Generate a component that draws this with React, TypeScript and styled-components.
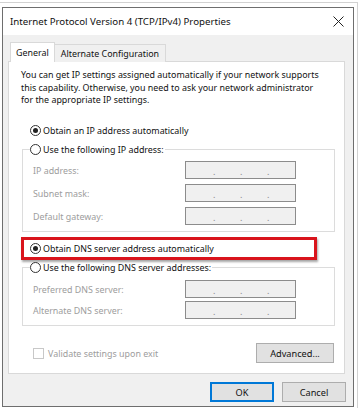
import * as React from "react";
import styled, { createGlobalStyle } from "styled-components";

const FONT = `"Noto Sans", "Open Sans", "Liberation Sans", sans-serif`;

const GlobalStyle = createGlobalStyle`
  html, body {
    margin: 0;
    padding: 0;
    background: #ffffff;
  }
  * {
    box-sizing: border-box;
  }
`;

const SScreen = styled.div`
  width: 358px;
  height: 408px;
  padding-top: 2px;
  font-family: ${FONT};
  font-size: 8.9px;
  color: #111;
`;

const SMat = styled.div`
  height: 406px;
  border-top: 1px solid #d2d2d2;
  border-right: 1px solid #d2d2d2;
  padding: 4px 3px 0 2px;
`;

const SWindow = styled.div`
  height: 400px;
  border: 1px solid #6e6e6e;
  display: flex;
  flex-direction: column;
`;

const STitleBar = styled.div`
  height: 27px;
  flex: none;
  background: #ffffff;
  display: flex;
  align-items: center;
  justify-content: space-between;
  padding: 0 9px 0 7px;
  font-size: 9.7px;
`;

const SBody = styled.div`
  flex: 1;
  background: #f0f0f0;
  padding: 7px 7px 4px 5px;
  display: flex;
  flex-direction: column;
`;

const STabStrip = styled.div`
  display: flex;
  align-items: flex-end;
  height: 20px;
  padding-left: 2px;
  margin-bottom: -1px;
  position: relative;
  z-index: 1;
`;

const STab = styled.div<{ $active?: boolean }>`
  height: ${(p) => (p.$active ? "20px" : "18px")};
  display: flex;
  align-items: center;
  padding: 0 ${(p) => (p.$active ? "5px" : "6px")};
  background: ${(p) => (p.$active ? "#ffffff" : "#f0f0f0")};
  border: 1px solid #d9d9d9;
  border-bottom: none;
  margin-left: ${(p) => (p.$active ? "0" : "-1px")};
`;

const SPanel = styled.div`
  height: 313px;
  margin-right: 1px;
  background: #ffffff;
  border: 1px solid #d9d9d9;
  padding: 7px 10px 10px 12px;
  display: flex;
  flex-direction: column;
`;

const SIntro = styled.p`
  margin: 0;
  line-height: 12.5px;
  white-space: nowrap;
`;

const SRadioRow = styled.label<{ $offset?: number }>`
  display: flex;
  align-items: center;
  gap: 2px;
  height: 14px;
  margin-left: ${(p) => p.$offset ?? 0}px;
  white-space: nowrap;
  color: #111;
`;

const SRadio = styled.span<{ $checked?: boolean }>`
  width: 11px;
  height: 11px;
  flex: none;
  border: 1px solid #333333;
  border-radius: 50%;
  background: #ffffff;
  display: flex;
  align-items: center;
  justify-content: center;
  &::after {
    content: "";
    width: 5px;
    height: 5px;
    border-radius: 50%;
    background: ${(p) => (p.$checked ? "#222222" : "transparent")};
  }
`;

const SGroup = styled.fieldset`
  margin: 0 0 0 1px;
  width: 313px;
  min-inline-size: 0;
  border: 1px solid #dcdcdc;
  padding: 0 10px 6px 7px;
`;

const SLegend = styled.legend`
  padding: 0 1px 0 0;
`;

const SFieldGrid = styled.div<{ $gap: number; $top: number }>`
  display: grid;
  grid-template-columns: 152px 111px;
  row-gap: ${(p) => p.$gap}px;
  align-items: center;
  padding: ${(p) => p.$top}px 0 0 3px;
`;

const SFieldLabel = styled.span`
  color: #9d9d9d;
`;

const SIpBox = styled.div`
  height: 18px;
  background: #f0f0f0;
  border: 1px solid #8c8c8c;
  display: flex;
  align-items: center;
  padding-left: 2px;
  color: #8a8a8a;
`;

const SOctet = styled.span`
  width: 25px;
  flex: none;
`;

const SDot = styled.span`
  width: 2px;
  flex: none;
  text-align: center;
  font-size: 9px;
  line-height: 1;
  padding-top: 3px;
`;

const SHighlight = styled.div`
  margin-top: 5px;
  width: 296px;
  height: 23px;
  border: 3px solid #d9141c;
  box-shadow: 1px 2px 2px rgba(0, 0, 0, 0.35);
  padding-left: 6px;
  display: flex;
  align-items: center;
`;

const SOptionsRow = styled.div`
  margin-top: 17px;
  height: 20px;
  display: flex;
  align-items: center;
  justify-content: space-between;
  padding-left: 12px;
`;

const SCheckLabel = styled.label`
  display: flex;
  align-items: center;
  gap: 4px;
  color: #9d9d9d;
`;

const SCheckBox = styled.span`
  width: 11px;
  height: 11px;
  border: 1px solid #c8c8c8;
  background: #ffffff;
`;

const SButton = styled.button<{ $primary?: boolean; $width: number }>`
  width: ${(p) => p.$width}px;
  height: 20px;
  padding: 0;
  font-family: ${FONT};
  font-size: 9.2px;
  color: #111;
  background: #e1e1e1;
  border: 1px solid ${(p) => (p.$primary ? "#0078d7" : "#adadad")};
  box-shadow: ${(p) => (p.$primary ? "inset 0 0 0 1px #0078d7" : "none")};
`;

const SFooter = styled.div`
  margin-top: 8px;
  display: flex;
  justify-content: flex-end;
  gap: 8px;
`;

const CloseIcon = () => (
  <svg width="11" height="11" viewBox="0 0 11 11">
    <path d="M0.5 0.5 L10.5 10.5 M10.5 0.5 L0.5 10.5" stroke="#222" strokeWidth="1" />
  </svg>
);

const IpField = () => (
  <SIpBox>
    <SOctet />
    <SDot>.</SDot>
    <SOctet />
    <SDot>.</SDot>
    <SOctet />
    <SDot>.</SDot>
    <SOctet />
  </SIpBox>
);

const ipRows = ["IP address:", "Subnet mask:", "Default gateway:"];
const dnsRows = ["Preferred DNS server:", "Alternate DNS server:"];

export default function App() {
  return (
    <SScreen>
      <GlobalStyle />
      <SMat>
        <SWindow>
          <STitleBar>
            <span>Internet Protocol Version 4 (TCP/IPv4) Properties</span>
            <CloseIcon />
          </STitleBar>
          <SBody>
            <STabStrip>
              <STab $active>General</STab>
              <STab>Alternate Configuration</STab>
            </STabStrip>
            <SPanel>
              <SIntro>
                You can get IP settings assigned automatically if your network supports
                <br />
                this capability. Otherwise, you need to ask your network administrator
                <br />
                for the appropriate IP settings.
              </SIntro>
              <SRadioRow $offset={9} style={{ marginTop: 16.5 }}>
                <SRadio $checked />
                Obtain an IP address automatically
              </SRadioRow>
              <SGroup style={{ marginTop: 5 }}>
                <SLegend>
                  <SRadioRow>
                    <SRadio />
                    Use the following IP address:
                  </SRadioRow>
                </SLegend>
                <SFieldGrid $gap={5} $top={5}>
                  {ipRows.map((label) => (
                    <React.Fragment key={label}>
                      <SFieldLabel>{label}</SFieldLabel>
                      <IpField />
                    </React.Fragment>
                  ))}
                </SFieldGrid>
              </SGroup>
              <SHighlight>
                <SRadioRow>
                  <SRadio $checked />
                  Obtain DNS server address automatically
                </SRadioRow>
              </SHighlight>
              <SGroup>
                <SLegend>
                  <SRadioRow>
                    <SRadio />
                    Use the following DNS server addresses:
                  </SRadioRow>
                </SLegend>
                <SFieldGrid $gap={3} $top={6}>
                  {dnsRows.map((label) => (
                    <React.Fragment key={label}>
                      <SFieldLabel>{label}</SFieldLabel>
                      <IpField />
                    </React.Fragment>
                  ))}
                </SFieldGrid>
              </SGroup>
              <SOptionsRow>
                <SCheckLabel>
                  <SCheckBox />
                  Validate settings upon exit
                </SCheckLabel>
                <SButton $width={78}>Advanced...</SButton>
              </SOptionsRow>
            </SPanel>
            <SFooter>
              <SButton $primary $width={64}>OK</SButton>
              <SButton $width={64}>Cancel</SButton>
            </SFooter>
          </SBody>
        </SWindow>
      </SMat>
    </SScreen>
  );
}
